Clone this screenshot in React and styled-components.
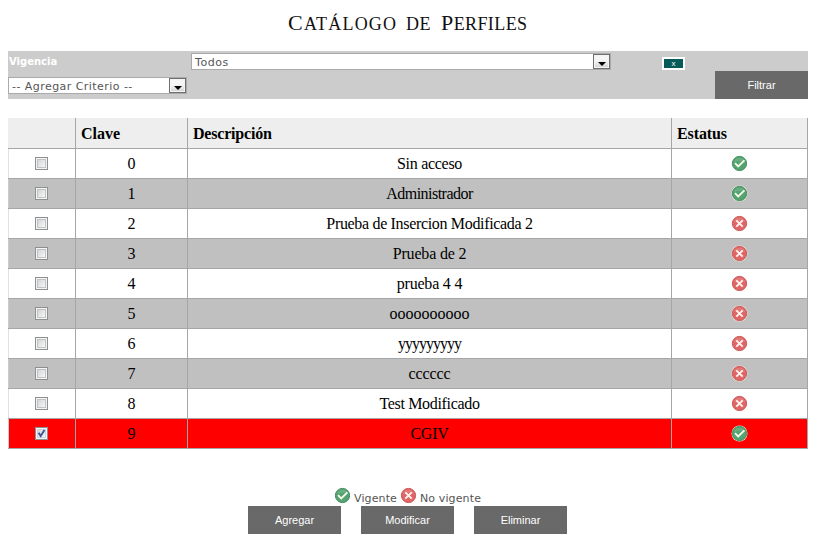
import React, { useState } from "react";
import styled, { createGlobalStyle } from "styled-components";

const GlobalStyle = createGlobalStyle`
  * { box-sizing: border-box; }
  body { margin: 0; background: #fff; overflow: hidden; }
`;

const Page = styled.main`
  width: 823px;
  height: 542px;
  padding: 0 15px 0 8px;
  display: flex;
  flex-direction: column;
  font-family: "DejaVu Sans", sans-serif;
  color: #555;
`;

const Title = styled.h1`
  margin: 0;
  height: 51px;
  padding: 10px 0 0 280px;
  display: flex;
  align-items: baseline;
  color: #111;
  font: 400 18px/26px "Liberation Serif", serif;
  text-transform: uppercase;
  white-space: nowrap;
`;

const Word = styled.span`
  display: block;
  width: ${(p) => p.$width}px;
  letter-spacing: ${(p) => p.$spacing}px;
  &::first-letter { font-size: ${(p) => (p.$capital ? 22 : 18)}px; }
`;

const FilterPanel = styled.section`
  height: 48px;
  background: #ccc;
  display: grid;
  grid-template-columns: 183px 471px 53px 93px;
  grid-template-rows: 20px 28px;
`;

const Label = styled.label`
  padding: 4px 0 0 1px;
  color: #fff;
  font-size: 10px;
  font-weight: 700;
  line-height: 14px;
`;

const Select = styled.div`
  width: ${(p) => p.$width}px;
  height: 17px;
  margin-top: ${(p) => p.$top}px;
  border: 1px solid #aaa;
  background: #fff;
  display: flex;
  justify-content: space-between;
  font-size: 11px;
  line-height: 17px;
  padding-left: 3px;
  letter-spacing: ${(p) => p.$spacing}px;
  white-space: nowrap;
`;

const SelectArrow = styled.span`
  width: 17px;
  height: 15px;
  border: 1px solid #707070;
  background: linear-gradient(#f5f5f5 45%, #d2d2d2);
  box-shadow: inset 0 0 0 1px #f4f4f4;
  display: flex;
  justify-content: center;
  padding-top: 7px;
  &::before {
    content: "";
    height: 4px;
    border: 4px solid transparent;
    border-top-color: #000;
    border-bottom: 0;
  }
`;

const RemoveButton = styled.button`
  width: 23px;
  height: 13px;
  margin-top: 6px;
  padding: 0;
  border: 2px solid #fff;
  background: #055b58;
  color: #fff;
  font: 8px/9px "Liberation Sans", sans-serif;
`;

const Button = styled.button`
  width: 93px;
  height: 28px;
  padding: 0;
  border: 0;
  background: #696969;
  color: #fff;
  font: 11px/28px "Liberation Sans", sans-serif;
`;

const FilterButton = styled(Button)`
  grid-column: 4;
`;

const Table = styled.div`
  width: 800px;
  margin-top: 19px;
  color: #000;
  font: 16px/20px "Liberation Serif", serif;
`;

const Row = styled.div`
  display: grid;
  grid-template-columns: 67px 112px 484px 136px;
  grid-template-rows: 100%;
  height: 30px;
  background: ${(p) => (p.$selected ? "#f00" : p.$striped ? "#c0c0c0" : "#fff")};
  border-left: 1px solid ${(p) => (p.$selected || p.$striped ? "#ccc" : "#e1e1e1")};
`;

const HeaderRow = styled(Row)`
  height: 31px;
  background: #eee;
  border-left-color: #eee;
  font-weight: 700;
`;

const Cell = styled.div`
  min-width: 0;
  border-right: 1px solid #a6a6a6;
  border-bottom: 1px solid #a6a6a6;
  display: flex;
  align-items: center;
  justify-content: center;
  &:first-child { margin-left: -1px; padding-left: 1px; }
`;

const HeaderCell = styled(Cell)`
  justify-content: flex-start;
  padding: 2px 0 0 5px;
  letter-spacing: ${(p) => p.$spacing || 0}px;
`;

const CellText = styled.span`
  padding-top: 1px;
  letter-spacing: ${(p) => p.$spacing || 0}px;
`;

const CheckboxButton = styled.button`
  width: 13px;
  height: 13px;
  margin-right: 1px;
  padding: 1px;
  border: 1px solid #8e8f8f;
  background: #f5f5f5;
  display: flex;
`;

const CheckboxFace = styled.span`
  width: 9px;
  height: 9px;
  border: 1px solid ${(p) => (p.$checked ? "#ccd3df" : "#c0c2c4")};
  background: linear-gradient(135deg, #d3d6d9, #f7f7f7);
  display: flex;
  svg { display: block; overflow: visible; }
`;

const Legend = styled.div`
  height: 57px;
  width: 800px;
  padding: 38px 0 0 326px;
  display: flex;
  align-items: flex-start;
  font-size: 11px;
  line-height: 16px;
`;

const LegendText = styled.span`
  width: ${(p) => p.$width}px;
  padding: 4px 0 0 3px;
  letter-spacing: 0.12px;
  white-space: nowrap;
`;

const Actions = styled.div`
  display: flex;
  gap: 20px;
  padding-left: 240px;
`;

const Icon = styled.svg`
  width: 17px;
  height: 17px;
  display: block;
  flex: none;
`;

function StatusIcon({ active, halo }) {
  return (
    <Icon viewBox="0 0 17 17" aria-label={active ? "Vigente" : "No vigente"}>
      {halo && <circle cx="8.5" cy="8.5" r="8" fill="#eee9df" />}
      <circle cx="8.5" cy="8.5" r="7.1" fill={active ? "#54a370" : "#df6666"} stroke={active ? "#3f8c5e" : "#ce5555"} />
      <path d="M2.7 7.2a6 6 0 0 1 11.6 0Q8.5 4.8 2.7 7.2Z" fill="#fff" opacity=".12" />
      {active ? (
        <path d="M4 8.2 7.2 11.4 13.4 5.4" fill="none" stroke="#f8fbe9" strokeWidth="1.9" />
      ) : (
        <path d="m5.3 5.3 6.4 6.4m0-6.4-6.4 6.4" fill="none" stroke="#fff4f0" strokeWidth="1.9" />
      )}
    </Icon>
  );
}

function Checkbox({ checked, onClick, label }) {
  return (
    <CheckboxButton role="checkbox" aria-checked={checked} aria-label={label} onClick={onClick}>
      <CheckboxFace $checked={checked}>
        {checked && (
          <svg width="7" height="7" viewBox="0 0 7 7">
            <path d="M.6 2.8 2.7 6 6.5 0" fill="none" stroke="#3e5795" strokeWidth="1.9" />
          </svg>
        )}
      </CheckboxFace>
    </CheckboxButton>
  );
}

const profiles = [
  { name: "Sin acceso", active: true, spacing: -0.28 },
  { name: "Administrador", active: true, spacing: -0.52 },
  { name: "Prueba de Insercion Modificada 2", spacing: -0.33 },
  { name: "Prueba de 2", spacing: -0.18 },
  { name: "prueba 4 4", spacing: -0.2 },
  { name: "oooooooooo" },
  { name: "yyyyyyyyy", spacing: -1 },
  { name: "cccccc", spacing: -0.1 },
  { name: "Test Modificado", spacing: -0.33 },
  { name: "CGIV", active: true, spacing: -0.25 },
];

export default function App() {
  const [selected, setSelected] = useState(9);
  return (
    <>
      <GlobalStyle />
      <Page>
        <Title>
          <Word $width={118} $spacing={1.2} $capital>Catálogo</Word>
          <Word $width={35} $spacing={0.5}>de</Word>
          <Word $width={90} $spacing={0.4} $capital>Perfiles</Word>
        </Title>
        <FilterPanel>
          <Label>Vigencia</Label>
          <Select $width={420} $top={2} $spacing={0.55}>Todos<SelectArrow /></Select>
          <RemoveButton>x</RemoveButton>
          <span />
          <Select $width={179} $top={6} $spacing={0.45}>-- Agregar Criterio --<SelectArrow /></Select>
          <FilterButton>Filtrar</FilterButton>
        </FilterPanel>
        <Table>
          <HeaderRow>
            <HeaderCell />
            <HeaderCell>Clave</HeaderCell>
            <HeaderCell $spacing={-0.2}>Descripción</HeaderCell>
            <HeaderCell $spacing={-0.1}>Estatus</HeaderCell>
          </HeaderRow>
          {profiles.map((profile, index) => (
            <Row key={index} $striped={index % 2 === 1} $selected={selected === index}>
              <Cell>
                <Checkbox
                  checked={selected === index}
                  label={profile.name}
                  onClick={() => setSelected(selected === index ? -1 : index)}
                />
              </Cell>
              <Cell><CellText>{index}</CellText></Cell>
              <Cell><CellText $spacing={profile.spacing}>{profile.name}</CellText></Cell>
              <Cell><StatusIcon active={profile.active} halo={index % 2 === 1} /></Cell>
            </Row>
          ))}
        </Table>
        <Legend>
          <StatusIcon active />
          <LegendText $width={49}>Vigente</LegendText>
          <StatusIcon />
          <LegendText $width={80}>No vigente</LegendText>
        </Legend>
        <Actions>
          <Button>Agregar</Button>
          <Button>Modificar</Button>
          <Button>Eliminar</Button>
        </Actions>
      </Page>
    </>
  );
}
